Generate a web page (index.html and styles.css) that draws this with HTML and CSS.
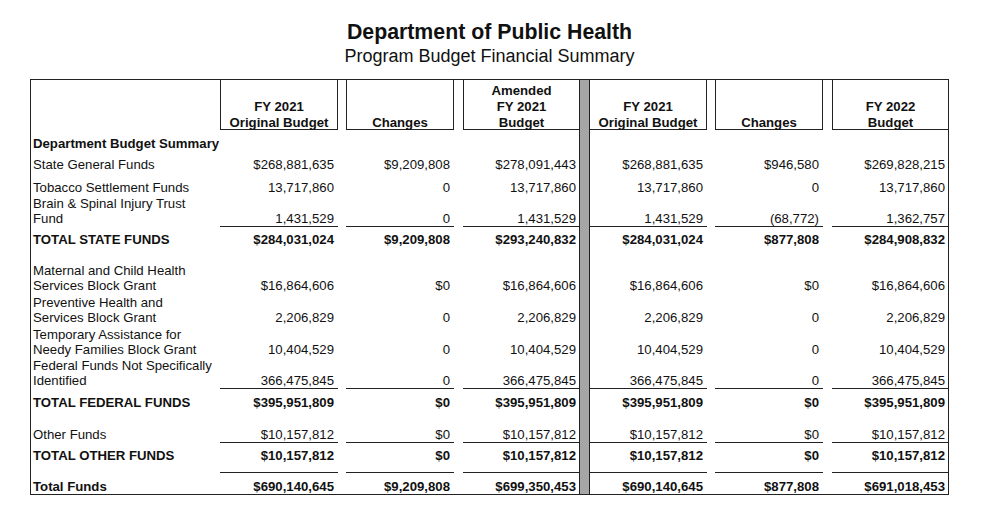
FILE: index.html
```html
<!DOCTYPE html>
<html lang="en">
<head>
<meta charset="utf-8">
<title>Department of Public Health</title>
<link rel="stylesheet" href="styles.css">
</head>
<body>
<div class="page">
  <header class="title">
    <h1>Department of Public Health</h1>
    <h2>Program Budget Financial Summary</h2>
  </header>
  <div class="sheet">
    <div class="row head">
      <div class="lbl"></div>
      <div class="hc"><div class="ht">FY 2021<br>Original Budget</div></div>
      <div class="hc"><div class="ht">Changes</div></div>
      <div class="hc"><div class="ht">Amended<br>FY 2021<br>Budget</div></div>
      <div class="bar"></div>
      <div class="hc"><div class="ht">FY 2021<br>Original Budget</div></div>
      <div class="hc"><div class="ht">Changes</div></div>
      <div class="hc"><div class="ht">FY 2022<br>Budget</div></div>
    </div>

    <div class="row h22 tot">
      <div class="lbl">Department Budget Summary</div>
      <div class="n"></div><div class="n"></div><div class="n"></div>
      <div class="bar"></div>
      <div class="n"></div><div class="n"></div><div class="n"></div>
    </div>

    <div class="row h21">
      <div class="lbl">State General Funds</div>
      <div class="n">$268,881,635</div><div class="n">$9,209,808</div><div class="n">$278,091,443</div>
      <div class="bar"></div>
      <div class="n">$268,881,635</div><div class="n">$946,580</div><div class="n">$269,828,215</div>
    </div>

    <div class="row h23">
      <div class="lbl">Tobacco Settlement Funds</div>
      <div class="n">13,717,860</div><div class="n">0</div><div class="n">13,717,860</div>
      <div class="bar"></div>
      <div class="n">13,717,860</div><div class="n">0</div><div class="n">13,717,860</div>
    </div>

    <div class="row h31 under">
      <div class="lbl">Brain &amp; Spinal Injury Trust<br>Fund</div>
      <div class="n">1,431,529</div><div class="n">0</div><div class="n">1,431,529</div>
      <div class="bar"></div>
      <div class="n">1,431,529</div><div class="n">(68,772)</div><div class="n">1,362,757</div>
    </div>

    <div class="row h21 tot">
      <div class="lbl">TOTAL STATE FUNDS</div>
      <div class="n">$284,031,024</div><div class="n">$9,209,808</div><div class="n">$293,240,832</div>
      <div class="bar"></div>
      <div class="n">$284,031,024</div><div class="n">$877,808</div><div class="n">$284,908,832</div>
    </div>

    <div class="row h46">
      <div class="lbl">Maternal and Child Health<br>Services Block Grant</div>
      <div class="n">$16,864,606</div><div class="n">$0</div><div class="n">$16,864,606</div>
      <div class="bar"></div>
      <div class="n">$16,864,606</div><div class="n">$0</div><div class="n">$16,864,606</div>
    </div>

    <div class="row h32">
      <div class="lbl">Preventive Health and<br>Services Block Grant</div>
      <div class="n">2,206,829</div><div class="n">0</div><div class="n">2,206,829</div>
      <div class="bar"></div>
      <div class="n">2,206,829</div><div class="n">0</div><div class="n">2,206,829</div>
    </div>

    <div class="row h32">
      <div class="lbl">Temporary Assistance for<br>Needy Families Block Grant</div>
      <div class="n">10,404,529</div><div class="n">0</div><div class="n">10,404,529</div>
      <div class="bar"></div>
      <div class="n">10,404,529</div><div class="n">0</div><div class="n">10,404,529</div>
    </div>

    <div class="row h31 under">
      <div class="lbl">Federal Funds Not Specifically<br>Identified</div>
      <div class="n">366,475,845</div><div class="n">0</div><div class="n">366,475,845</div>
      <div class="bar"></div>
      <div class="n">366,475,845</div><div class="n">0</div><div class="n">366,475,845</div>
    </div>

    <div class="row h22 tot">
      <div class="lbl">TOTAL FEDERAL FUNDS</div>
      <div class="n">$395,951,809</div><div class="n">$0</div><div class="n">$395,951,809</div>
      <div class="bar"></div>
      <div class="n">$395,951,809</div><div class="n">$0</div><div class="n">$395,951,809</div>
    </div>

    <div class="row h32 under">
      <div class="lbl">Other Funds</div>
      <div class="n">$10,157,812</div><div class="n">$0</div><div class="n">$10,157,812</div>
      <div class="bar"></div>
      <div class="n">$10,157,812</div><div class="n">$0</div><div class="n">$10,157,812</div>
    </div>

    <div class="row h30 tot under spaced">
      <div class="lbl">TOTAL OTHER FUNDS</div>
      <div class="n">$10,157,812</div><div class="n">$0</div><div class="n">$10,157,812</div>
      <div class="bar"></div>
      <div class="n">$10,157,812</div><div class="n">$0</div><div class="n">$10,157,812</div>
    </div>

    <div class="row h21 tot last">
      <div class="lbl">Total Funds</div>
      <div class="n">$690,140,645</div><div class="n">$9,209,808</div><div class="n">$699,350,453</div>
      <div class="bar"></div>
      <div class="n">$690,140,645</div><div class="n">$877,808</div><div class="n">$691,018,453</div>
    </div>
  </div>
</div>
</body>
</html>
```

FILE: styles.css
```css
* { box-sizing: border-box; }

body {
  margin: 0;
  background: #fff;
  color: #111;
  font-family: "Liberation Sans", Arial, sans-serif;
}

.page {
  width: 919px;
  margin-left: 30px;
  padding-top: 20px;
}

.title { text-align: center; }

.title h1 {
  margin: 0;
  font-size: 21.3px;
  line-height: 24px;
  font-weight: bold;
}

.title h2 {
  margin: 2px 0 0;
  font-size: 18px;
  line-height: 20px;
  font-weight: normal;
}

.sheet {
  margin-top: 13px;
  border: 1px solid #222;
  font-size: 13.2px;
  line-height: 15px;
}

.row {
  display: grid;
  grid-template-columns: 189px 118px 116px 125px 11px 117px 116px 125px;
}

.row > * { align-self: end; }

.row > :nth-child(3),
.row > :nth-child(7) { margin-left: 8px; }

.row > :nth-child(4),
.row > :nth-child(8) { margin-left: 9px; }

.bar {
  align-self: stretch;
  background: #a6a6a6;
  border-left: 1px solid #222;
  border-right: 1px solid #222;
}

/* row heights */
.head { height: 50px; }
.h21 { height: 21px; }
.h22 { height: 22px; }
.h23 { height: 23px; }
.h30 { height: 30px; }
.h31 { height: 31px; }
.h32 { height: 32px; }
.h46 { height: 46px; }

/* header cells */
.hc {
  align-self: stretch;
  display: flex;
  flex-direction: column;
  justify-content: flex-end;
  text-align: center;
  font-weight: bold;
  line-height: 16px;
  border-bottom: 1px solid #222;
}

.ht { margin-bottom: -2px; }

.head > :nth-child(2),
.head > :nth-child(3),
.head > :nth-child(4),
.head > :nth-child(7),
.head > :nth-child(8) { border-left: 1px solid #222; }

.head > :nth-child(2),
.head > :nth-child(3),
.head > :nth-child(6),
.head > :nth-child(7) { border-right: 1px solid #222; }

/* body cells */
.lbl {
  padding-left: 2px;
  white-space: nowrap;
  border-bottom: 1px solid transparent;
}

.head > .lbl { border-bottom: 0; }

.n {
  text-align: right;
  padding-right: 4px;
  white-space: nowrap;
  border-bottom: 1px solid transparent;
}

.row > .n:nth-child(4),
.row > .n:nth-child(8) { padding-right: 3px; }

.tot { font-weight: bold; }

.under > .n { border-bottom-color: #222; }

.spaced > .lbl,
.spaced > .n { padding-bottom: 9px; }

.last > .lbl,
.last > .n { border-bottom: 0; }
```
